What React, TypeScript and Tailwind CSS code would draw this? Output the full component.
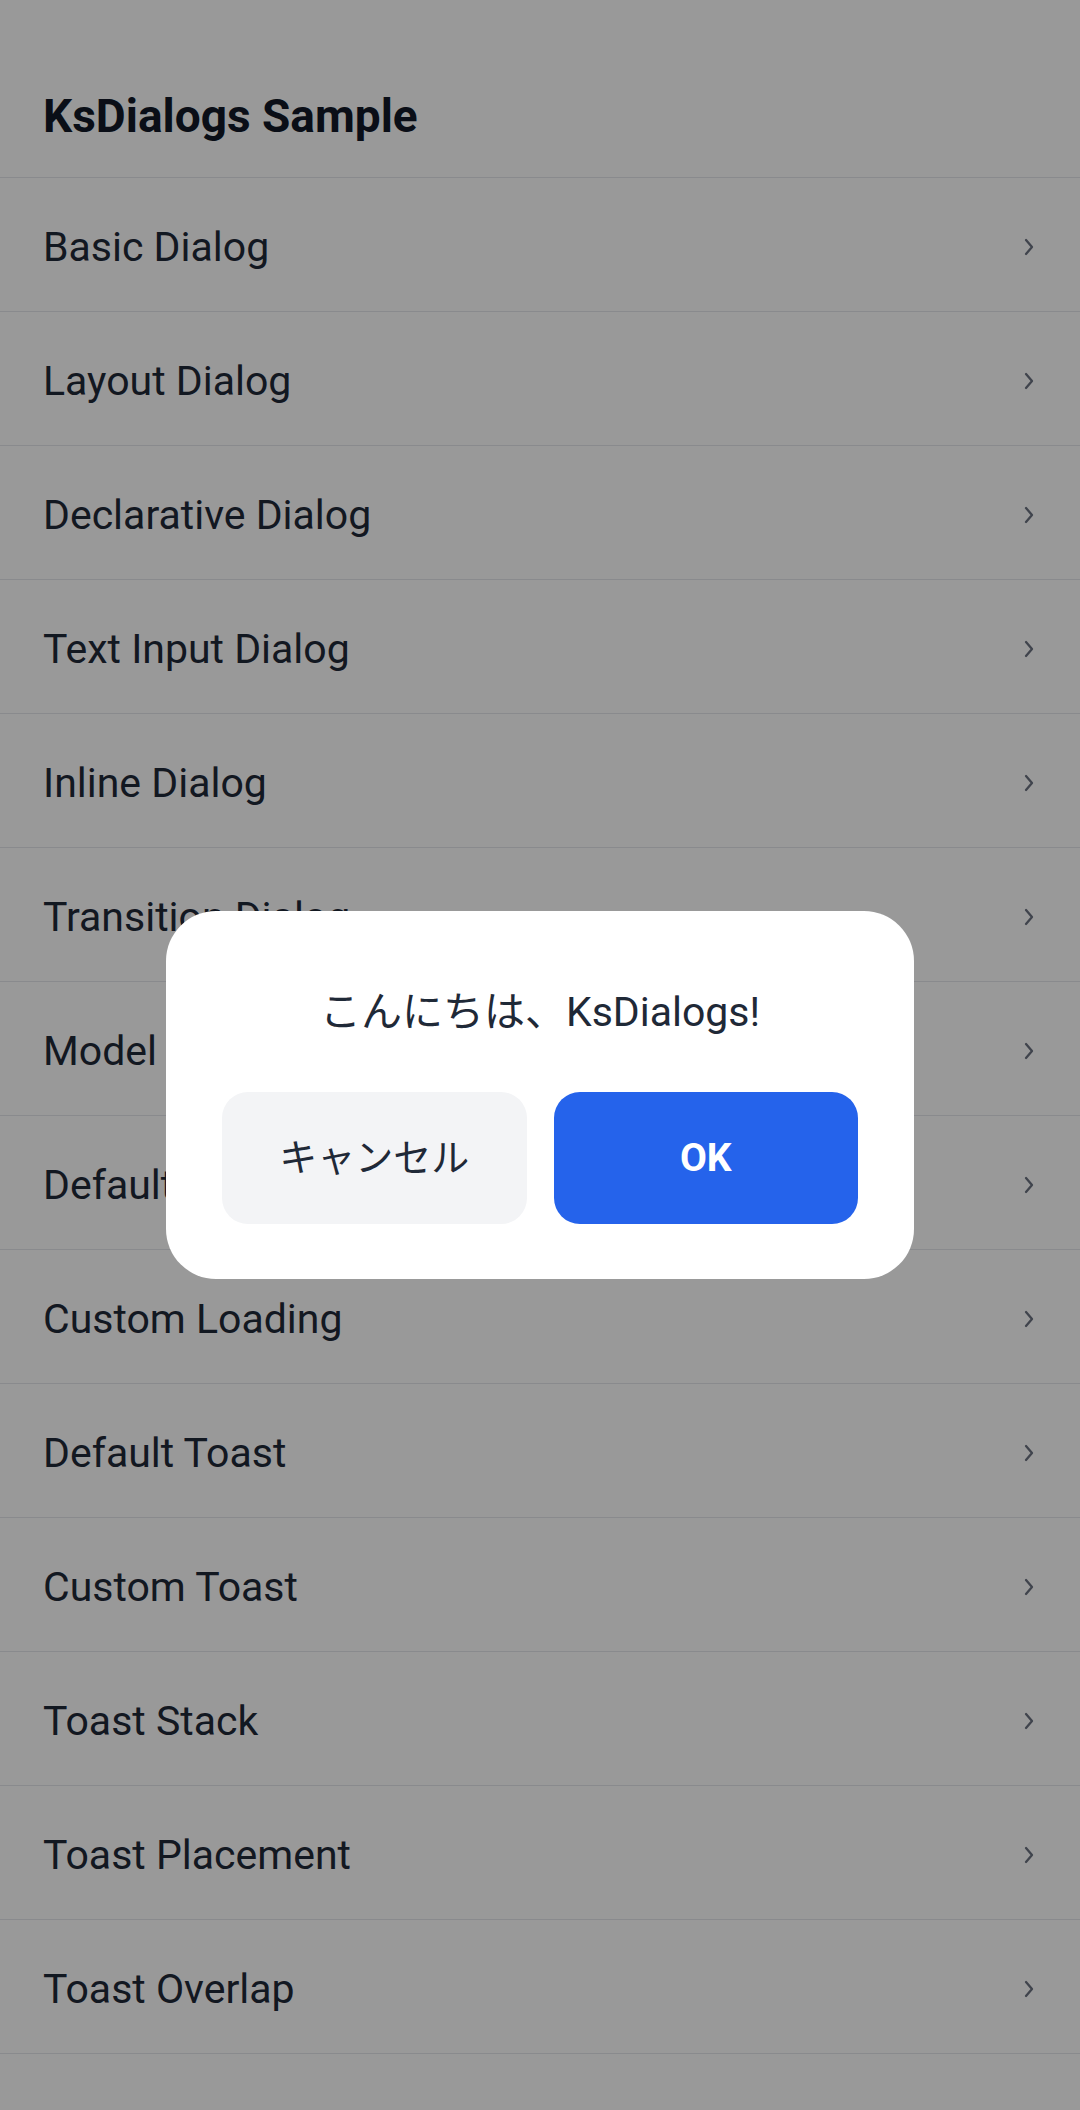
import React from "react";

const items = [
  "Basic Dialog",
  "Layout Dialog",
  "Declarative Dialog",
  "Text Input Dialog",
  "Inline Dialog",
  "Transition Dialog",
  "Model Dialog",
  "Default Loading",
  "Custom Loading",
  "Default Toast",
  "Custom Toast",
  "Toast Stack",
  "Toast Placement",
  "Toast Overlap",
];

function Chevron() {
  return (
    <svg width="10" height="18" viewBox="0 0 10 18" fill="none" className="shrink-0">
      <path d="M2 2 L8 9 L2 16" stroke="#6b7280" strokeWidth="2.3" strokeLinecap="round" strokeLinejoin="round" />
    </svg>
  );
}

export default function App() {
  return (
    <div
      className="relative w-[1080px] h-[2110px] overflow-hidden bg-white"
      style={{ fontFamily: 'Roboto, "Noto Sans CJK JP", sans-serif' }}
    >
      <div className="h-[178px] border-b border-[#e5e7eb] pl-[43px] pt-[88px]">
        <h1 className="text-[46px] leading-[56px] font-bold text-[#111827]">KsDialogs Sample</h1>
      </div>
      <ul>
        {items.map((t) => (
          <li
            key={t}
            className="h-[134px] border-b border-[#e5e7eb] flex items-center justify-between pl-[43px] pr-[46px] pt-[4px]"
          >
            <span className="text-[41px] leading-[48px] text-[#1f2937]">{t}</span>
            <Chevron />
          </li>
        ))}
      </ul>

      <div className="absolute inset-0 bg-black/40 flex justify-center items-start pt-[911px]">
        <div className="w-[748px] rounded-[50px] bg-white px-[56px] pt-[77px] pb-[55px] flex flex-col">
          <p className="text-center text-[41px] leading-[48px] text-[#1f2937]">こんにちは、KsDialogs!</p>
          <div className="mt-[56px] flex gap-[27px]">
            <button className="flex-1 h-[132px] rounded-[26px] bg-[#f3f4f6] text-[38px] text-[#1f2937] flex items-center justify-center">
              キャンセル
            </button>
            <button className="flex-1 h-[132px] rounded-[26px] bg-[#2563eb] text-[39px] font-bold text-white flex items-center justify-center">
              OK
            </button>
          </div>
        </div>
      </div>
    </div>
  );
}
